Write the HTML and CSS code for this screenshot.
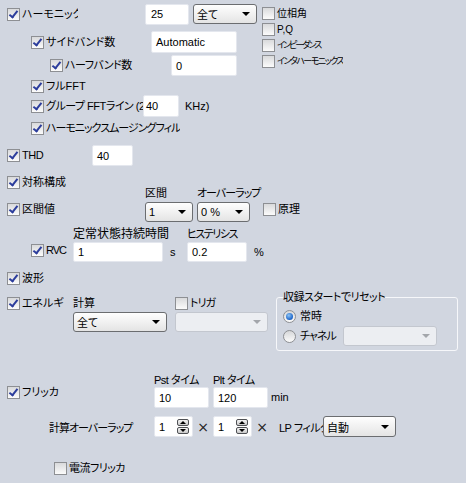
FILE: index.html
```html
<!DOCTYPE html>
<html>
<head>
	<meta charset="utf-8">
	<link rel="stylesheet" href="styles.css">
</head>
<body>
<div class="panel">

	<!-- harmonics section with the side options -->
	<div class="top">
		<div class="harm">
			<div class="row r-harm">
				<label class="chk w-harm"><span class="box on"></span>ハーモニック</label>
				<div class="field f-order">25</div>
				<div class="select s-range"><span>全て</span><i class="arrow"></i></div>
			</div>
			<div class="row r-side">
				<label class="chk w-side"><span class="box on"></span>サイドバンド数</label>
				<div class="field f-side">Automatic</div>
			</div>
			<div class="row r-half">
				<label class="chk w-half ls-05"><span class="box on"></span>ハーフバンド数</label>
				<div class="field f-half">0</div>
			</div>
			<div class="row r-full">
				<label class="chk"><span class="box on"></span>フルFFT</label>
			</div>
			<div class="row r-group">
				<label class="chk w-group ls-05"><span class="box on"></span>グループ FFTライン (2</label>
				<div class="field f-group">40</div>
				<span class="unit u-khz">KHz)</span>
			</div>
			<div class="row r-smooth">
				<label class="chk ls-1"><span class="box on"></span>ハーモニックスムージングフィル</label>
			</div>
		</div>
		<div class="opts">
			<label class="chk"><span class="box"></span>位相角</label>
			<label class="chk"><span class="box"></span>P,Q</label>
			<label class="chk small ls-2"><span class="box"></span>インピーダンス</label>
			<label class="chk small ls-15"><span class="box"></span>インタハーモニックス</label>
		</div>
	</div>

	<div class="row r-thd">
		<label class="chk w-thd ls-05"><span class="box on"></span>THD</label>
		<div class="field f-thd">40</div>
	</div>

	<div class="row r-sym">
		<label class="chk"><span class="box on"></span>対称構成</label>
	</div>

	<div class="iv">
		<label class="chk w-iv"><span class="box on"></span>区間値</label>
		<div class="col c-iv">
			<div class="cap">区間</div>
			<div class="select"><span>1</span><i class="arrow"></i></div>
		</div>
		<div class="col c-ovl">
			<div class="cap ls-1">オーバーラップ</div>
			<div class="select"><span>0 %</span><i class="arrow"></i></div>
		</div>
		<label class="chk ck-principle"><span class="box"></span>原理</label>
	</div>

	<div class="rvc">
		<label class="chk w-rvc ls-1"><span class="box on"></span>RVC</label>
		<div class="col c-steady">
			<div class="cap cap-big">定常状態持続時間</div>
			<div class="field f-low">1</div>
		</div>
		<span class="unit u-s">s</span>
		<div class="col c-hyst">
			<div class="cap ls-15">ヒステリシス</div>
			<div class="field f-low">0.2</div>
		</div>
		<span class="unit u-pct">%</span>
	</div>

	<div class="row r-wave">
		<label class="chk"><span class="box on"></span>波形</label>
	</div>

	<div class="energy">
		<label class="chk w-energy"><span class="box on"></span>エネルギー</label>
		<div class="col c-calc">
			<div class="cap cap-calc">計算</div>
			<div class="select"><span>全て</span><i class="arrow"></i></div>
		</div>
		<div class="col c-trig">
			<label class="chk ck-trig ls-1"><span class="box"></span>トリガ</label>
			<div class="select off"><span></span><i class="arrow"></i></div>
		</div>
		<fieldset class="group">
			<legend class="ls-05">収録スタートでリセット</legend>
			<div class="row r-always">
				<label class="chk"><span class="radio on"></span>常時</label>
			</div>
			<div class="row r-chan">
				<label class="chk w-chan ls-1"><span class="radio"></span>チャネル</label>
				<div class="select off s-chan"><span></span><i class="arrow"></i></div>
			</div>
		</fieldset>
	</div>

	<div class="flicker">
		<label class="chk w-flicker"><span class="box on"></span>フリッカ</label>
		<div class="col c-pst">
			<div class="cap ls-05">Pst タイム</div>
			<div class="field">10</div>
		</div>
		<div class="col c-plt">
			<div class="cap ls-05">Plt タイム</div>
			<div class="field">120</div>
		</div>
		<span class="unit u-min">min</span>
	</div>

	<div class="row r-overlap">
		<span class="lbl w-overlap ls-1">計算オーバーラップ</span>
		<div class="field spin"><span>1</span><span class="spinner"><i class="up"></i><i class="down"></i></span></div>
		<span class="times">×</span>
		<div class="field spin"><span>1</span><span class="spinner"><i class="up"></i><i class="down"></i></span></div>
		<span class="times">×</span>
		<span class="lbl w-lp ls-05">LP フィルタ</span>
		<div class="select s-lp"><span>自動</span><i class="arrow"></i></div>
	</div>

	<div class="row r-iflicker">
		<label class="chk ls-05"><span class="box"></span>電流フリッカ</label>
	</div>

</div>
</body>
</html>
```

FILE: styles.css
```css
html, body {
	margin: 0;
	padding: 0;
}
body {
	background-color: #d1d6e0;
	font-family: "Liberation Sans", "Noto Sans CJK JP", sans-serif;
	font-size: 11px;
	font-feature-settings: "palt";
	color: #000;
}
.panel {
	width: 466px;
	height: 483px;
	padding: 3px 0 0 7px;
	box-sizing: border-box;
	overflow: hidden;
}

.ls-05 { letter-spacing: -0.5px; }
.ls-1 { letter-spacing: -1px; }
.ls-15 { letter-spacing: -1.5px; }
.ls-2 { letter-spacing: -2px; }

/* controls */
.row {
	display: flex;
	align-items: center;
}
.chk {
	display: flex;
	align-items: center;
	gap: 2px;
	height: 13px;
	line-height: 13px;
	white-space: nowrap;
	overflow: hidden;
	flex: none;
}
.box {
	position: relative;
	flex: none;
	width: 11px;
	height: 11px;
	border: 1px solid #8d8f93;
	background: linear-gradient(#d9dadc, #fbfbfb);
}
.box.on::after {
	content: '';
	position: absolute;
	left: 3px;
	top: 0px;
	width: 3px;
	height: 7px;
	border: solid #2c3d9c;
	border-width: 0 2px 2px 0;
	transform: rotate(38deg);
}
.radio {
	position: relative;
	flex: none;
	width: 11px;
	height: 11px;
	border: 1px solid #8d8f93;
	border-radius: 50%;
	background: linear-gradient(#d6d7d9, #fbfbfb);
	margin-right: 2px;
}
.radio.on::after {
	content: '';
	position: absolute;
	left: 2px;
	top: 2px;
	width: 7px;
	height: 7px;
	border-radius: 50%;
	background: radial-gradient(circle at 40% 35%, #8ec4f4, #1a63c8 70%, #123f8c);
}
.field {
	flex: none;
	display: flex;
	align-items: center;
	box-sizing: border-box;
	height: 21px;
	padding-left: 4px;
	background: #fff;
	border: 1px solid #e4e7ee;
	border-radius: 2px;
}
.select {
	flex: none;
	display: flex;
	align-items: center;
	justify-content: space-between;
	box-sizing: border-box;
	height: 20px;
	padding: 0 6px 0 3px;
	border: 1px solid #6b6d70;
	border-radius: 3px;
	background: linear-gradient(#fefefe, #e4e4e4);
}
.arrow {
	width: 0;
	height: 0;
	border-left: 4px solid transparent;
	border-right: 4px solid transparent;
	border-top: 4px solid #000;
}
.select.off {
	border-color: #c3c7cf;
	background: #eceef2;
}
.select.off .arrow {
	border-top-color: #a3a6ab;
}
.col {
	display: flex;
	flex-direction: column;
	flex: none;
}
.cap {
	height: 12px;
	line-height: 12px;
	margin-bottom: 2px;
	white-space: nowrap;
}
.cap-big {
	font-size: 12px;
}
.unit {
	flex: none;
	line-height: 20px;
}
.lbl {
	flex: none;
	white-space: nowrap;
	overflow: hidden;
}

/* harmonics */
.top {
	display: flex;
	align-items: flex-start;
}
.harm {
	width: 250px;
}
.opts {
	margin-left: 5px;
	padding-top: 4px;
	display: flex;
	flex-direction: column;
	gap: 3px;
	font-size: 10px;
}
.opts .small {
	font-size: 9px;
}
.r-harm {
	height: 22px;
}
.w-harm {
	width: 71px;
}
.f-order {
	width: 44px;
	margin-left: 67px;
	padding-left: 5px;
}
.s-range {
	width: 64px;
	margin-left: 4px;
}
.r-side {
	margin-top: 6px;
	height: 22px;
	padding-left: 24px;
}
.w-side {
	width: 120px;
}
.f-side {
	width: 86px;
	height: 22px;
}
.r-half {
	margin-top: 2px;
	height: 21px;
	padding-left: 43px;
}
.w-half {
	width: 121px;
}
.f-half {
	width: 66px;
}
.r-full {
	margin-top: 2px;
	height: 17px;
	padding-left: 24px;
}
.r-group {
	height: 22px;
	padding-left: 24px;
}
.w-group {
	width: 112px;
}
.f-group {
	width: 36px;
	height: 22px;
	padding-left: 2px;
}
.u-khz {
	margin-left: 6px;
}
.r-smooth {
	margin-top: 1px;
	height: 20px;
	padding-left: 24px;
}

/* thd, symmetry, interval */
.r-thd {
	margin-top: 7px;
	height: 21px;
}
.w-thd {
	width: 85px;
}
.f-thd {
	width: 41px;
}
.r-sym {
	margin-top: 10px;
	height: 13px;
}
.iv {
	display: flex;
	align-items: flex-end;
	margin-top: -2px;
}
.iv .cap {
	margin-bottom: 3px;
}
.w-iv {
	width: 138px;
	margin-bottom: 6px;
}
.c-iv {
	width: 48px;
}
.c-ovl {
	width: 53px;
	margin-left: 4px;
}
.ck-principle {
	margin-left: 13px;
	margin-bottom: 6px;
}

/* rvc */
.rvc {
	display: flex;
	align-items: flex-end;
	margin-top: 6px;
	padding-left: 24px;
}
.w-rvc {
	width: 42px;
	margin-bottom: 5px;
}
.c-steady {
	width: 90px;
}
.f-low {
	height: 20px;
}
.u-s {
	width: 24px;
	text-indent: 7px;
}
.c-hyst {
	width: 60px;
}
.u-pct {
	margin-left: 7px;
}
.r-wave {
	margin-top: 10px;
	height: 13px;
}

/* energy */
.energy {
	display: flex;
	align-items: flex-start;
	margin-top: 12px;
}
.w-energy {
	width: 57px;
	margin-right: 9px;
}
.c-calc {
	width: 94px;
}
.cap-calc {
	height: 13px;
	line-height: 13px;
}
.c-trig {
	width: 93px;
	margin-left: 8px;
}
.ck-trig {
	margin-bottom: 2px;
}
.group {
	width: 182px;
	box-sizing: border-box;
	margin: -6px 0 0 8px;
	padding: 7px 6px 4px;
	border: 1px solid #f6f7fa;
	border-radius: 3px;
}
.group legend {
	padding: 0;
	line-height: 12px;
}
.r-always {
	height: 12px;
}
.r-chan {
	margin-top: 4px;
	height: 20px;
}
.w-chan {
	width: 60px;
}
.s-chan {
	width: 94px;
}

/* flicker */
.flicker {
	display: flex;
	align-items: flex-end;
	margin-top: 23px;
}
.flicker .cap {
	margin-bottom: 1px;
}
.w-flicker {
	width: 147px;
	margin-bottom: 9px;
}
.c-pst,
.c-plt {
	width: 55px;
}
.c-plt {
	margin-left: 4px;
}
.u-min {
	margin-left: 3px;
	line-height: 21px;
}
.r-overlap {
	margin-top: 8px;
	height: 21px;
	padding-left: 42px;
}
.w-overlap {
	width: 105px;
}
.spin {
	width: 39px;
	justify-content: space-between;
	padding-right: 3px;
}
.spinner {
	display: flex;
	flex-direction: column;
	gap: 1px;
}
.spinner i {
	display: flex;
	align-items: center;
	justify-content: center;
	width: 10px;
	height: 5px;
	border: 1px solid #4f5155;
	border-radius: 2px;
	background: linear-gradient(#f4f4f4, #c9c9c9);
}
.spinner i::after {
	content: '';
	border-left: 3px solid transparent;
	border-right: 3px solid transparent;
}
.spinner .up::after {
	border-bottom: 3px solid #000;
}
.spinner .down::after {
	border-top: 3px solid #000;
}
.times {
	width: 20px;
	flex: none;
	text-align: center;
	font-family: "DejaVu Sans", sans-serif;
	font-size: 14px;
	color: #222;
}
.w-lp {
	width: 44px;
	margin-left: 7px;
}
.s-lp {
	width: 73px;
	height: 21px;
}
.r-iflicker {
	margin-top: 25px;
	height: 13px;
	padding-left: 47px;
}
```
